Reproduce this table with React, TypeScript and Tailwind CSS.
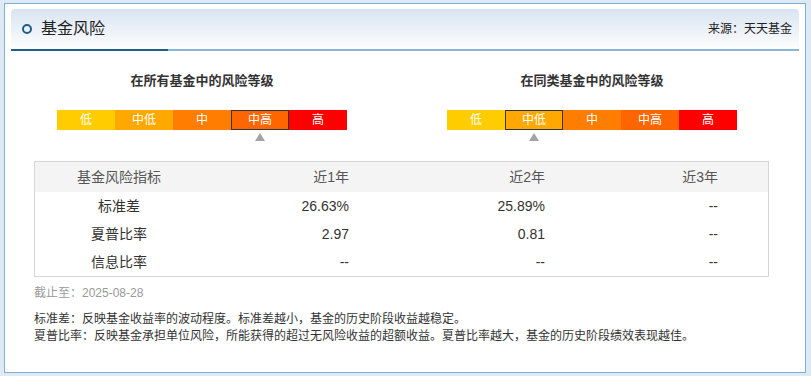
import React from "react";

interface Level {
  label: string;
  bg: string;
}

const levels: Level[] = [
  { label: "低", bg: "bg-[#ffcc00]" },
  { label: "中低", bg: "bg-[#ffa800]" },
  { label: "中", bg: "bg-[#ff7d00]" },
  { label: "中高", bg: "bg-[#ff6600]" },
  { label: "高", bg: "bg-[#ff0000]" },
];

const rows = [
  { name: "标准差", v1: "26.63%", v2: "25.89%", v3: "--" },
  { name: "夏普比率", v1: "2.97", v2: "0.81", v3: "--" },
  { name: "信息比率", v1: "--", v2: "--", v3: "--" },
];

function RiskBar({ title, active }: { title: string; active: number }) {
  return (
    <div className="w-[290px]">
      <div className="text-center text-[13px] leading-[16px] font-bold text-[#333]">
        {title}
      </div>
      <div className="mt-[21px] flex h-[20px]">
        {levels.map((lv, i) => (
          <div
            key={lv.label}
            className={`flex h-[20px] w-[58px] items-center justify-center text-[12px] text-white ${lv.bg} ${
              i === active ? "border border-[#333]" : ""
            }`}
          >
            {lv.label}
          </div>
        ))}
      </div>
      <div className="mt-[3px] flex h-[8px]">
        <div style={{ marginLeft: active * 58 + 24 }} className="h-0 w-0 border-x-[5px] border-b-[8px] border-x-transparent border-b-[#a3a3a3]" />
      </div>
    </div>
  );
}

export default function App() {
  return (
    <div className="h-[376px] w-[811px] bg-[#dde9f5] pt-[3px] pl-[4px] font-['Liberation_Sans','Noto_Sans_CJK_SC',sans-serif]">
      <div className="h-[370px] w-[802px] border border-[#7eb0d6] bg-white px-[6px] pt-[5px]">
        {/* Header */}
        <div className="rounded-t-[4px] bg-linear-to-b from-[#d9e4f1] to-white">
          <div className="flex h-[40px] items-center pl-[11px] pr-[7px]">
            <div className="h-[10px] w-[10px] rounded-full border-2 border-[#1e5f8a]" />
            <div className="ml-[9px] text-[16px] text-[#222]">基金风险</div>
            <div className="ml-auto text-[12px] text-[#222]">来源：天天基金</div>
          </div>
          <div className="flex h-[2px]">
            <div className="w-[157px] bg-[#1e5f8a]" />
            <div className="flex-1 bg-[#8ab6d6]" />
          </div>
        </div>

        {/* Risk levels */}
        <div className="mt-[22px] flex gap-[100px] pl-[46px]">
          <RiskBar title="在所有基金中的风险等级" active={3} />
          <RiskBar title="在同类基金中的风险等级" active={1} />
        </div>

        {/* Table */}
        <div className="mt-[20px] ml-[23px] w-[735px] border border-[#d6d6d6] text-[14px]">
          <div className="grid h-[30px] grid-cols-[168px_146px_196px_173px] items-center bg-[#f4f4f4] text-[#555]">
            <div className="text-center">基金风险指标</div>
            <div className="text-right">近1年</div>
            <div className="text-right">近2年</div>
            <div className="text-right">近3年</div>
          </div>
          {rows.map((r) => (
            <div
              key={r.name}
              className="grid h-[28px] grid-cols-[168px_146px_196px_173px] items-center text-[#333]"
            >
              <div className="text-center">{r.name}</div>
              <div className="text-right">{r.v1}</div>
              <div className="text-right">{r.v2}</div>
              <div className="text-right">{r.v3}</div>
            </div>
          ))}
        </div>

        {/* Notes */}
        <div className="ml-[23px] mt-[7px] text-[12px] leading-[18px] text-[#999]">
          截止至：2025-08-28
        </div>
        <div className="ml-[23px] mt-[9px] text-[12px] leading-[17px] text-[#333]">
          <div>标准差：反映基金收益率的波动程度。标准差越小，基金的历史阶段收益越稳定。</div>
          <div>夏普比率：反映基金承担单位风险，所能获得的超过无风险收益的超额收益。夏普比率越大，基金的历史阶段绩效表现越佳。</div>
        </div>
      </div>
    </div>
  );
}
